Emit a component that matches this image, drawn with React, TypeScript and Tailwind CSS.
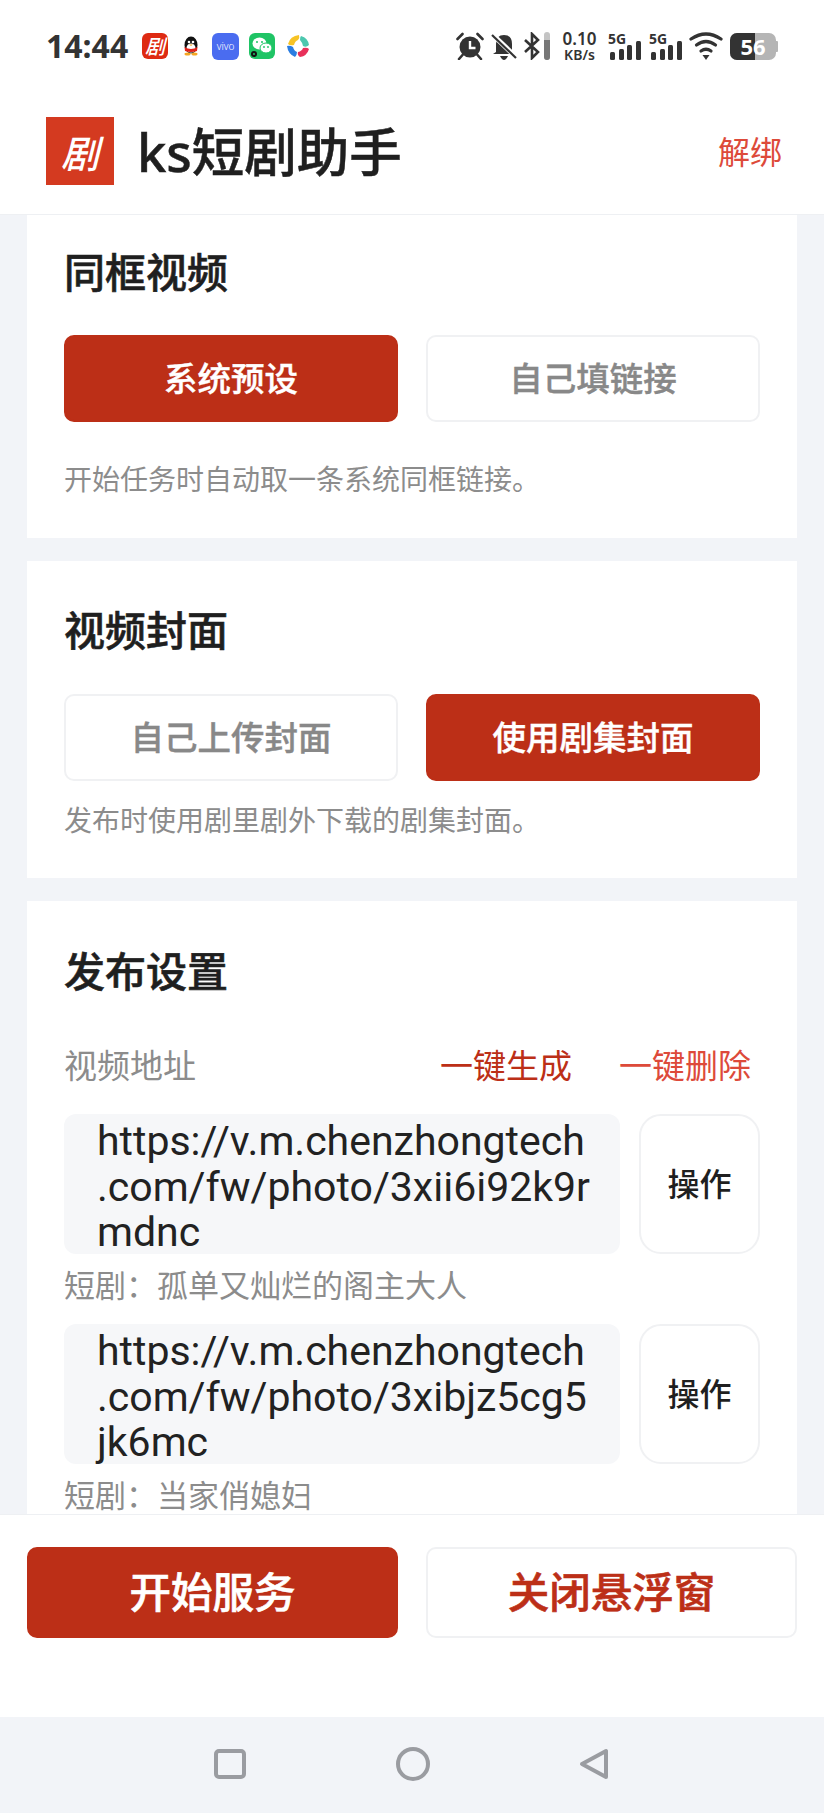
const font = { fontFamily: '"Noto Sans", "Noto Sans CJK SC", sans-serif' };

function Logo({ cls, text }: { cls: string; text: string }) {
  return (
    <div className={`flex items-center justify-center text-white italic font-medium font-['Noto_Sans_CJK_SC'] ${cls}`}>
      {text}
    </div>
  );
}

function Signal({ cls }: { cls: string }) {
  return (
    <div className={`w-[33px] h-[28px] relative ${cls}`}>
      <span className="absolute left-0 top-0 text-[14px] leading-[14px] font-bold font-['Noto_Sans']">5G</span>
      <div className="absolute left-[2px] bottom-0 flex items-end gap-[3.5px]">
        <div className="w-[5px] h-[8px] rounded-[1.5px] bg-[#333]" />
        <div className="w-[5px] h-[11px] rounded-[1.5px] bg-[#333]" />
        <div className="w-[5px] h-[15px] rounded-[1.5px] bg-[#333]" />
        <div className="w-[5px] h-[19px] rounded-[1.5px] bg-[#333]" />
      </div>
    </div>
  );
}

function StatusBar() {
  return (
    <div className="h-[90px] shrink-0 flex items-center pl-[46px] pr-[46px] pt-[2px] bg-white text-[#333]">
      <span className="text-[32px] font-bold leading-none w-[82px] font-['Noto_Sans'] whitespace-nowrap">14:44</span>
      <div className="flex items-center ml-[14px]">
        <Logo cls="w-[26px] h-[26px] rounded-[6px] bg-[#de2a12] text-[20px]" text="剧" />
        <svg width="26" height="26" viewBox="0 0 26 26" className="ml-[10px]">
          <ellipse cx="13" cy="12" rx="6.5" ry="8.5" fill="#111" />
          <ellipse cx="13" cy="15" rx="4.5" ry="4.5" fill="#fff" />
          <path d="M6.5 14 Q13 18 19.5 14 L19 18 Q13 20 7 18Z" fill="#e2231a" />
          <ellipse cx="9.5" cy="21" rx="3" ry="1.5" fill="#f5a623" />
          <ellipse cx="16.5" cy="21" rx="3" ry="1.5" fill="#f5a623" />
          <circle cx="11" cy="9" r="1.3" fill="#fff" />
          <circle cx="15" cy="9" r="1.3" fill="#fff" />
          <path d="M11 11.5 H15 L13 13Z" fill="#f5a623" />
        </svg>
        <div className="ml-[8px] w-[27px] h-[27px] rounded-[6px] bg-[#4a6cf0] text-white text-[10px] leading-[27px] text-center font-['Noto_Sans'] font-light">vivo</div>
        <svg width="26" height="26" viewBox="0 0 26 26" className="ml-[10px]">
          <rect width="26" height="26" rx="6" fill="#1fc465" />
          <ellipse cx="10.5" cy="10.5" rx="7" ry="6" fill="#fff" />
          <ellipse cx="17" cy="15" rx="6" ry="5" fill="#fff" stroke="#1fc465" />
          <circle cx="8" cy="9" r="1" fill="#1fc465" />
          <circle cx="13" cy="9" r="1" fill="#1fc465" />
          <circle cx="15" cy="14" r="0.9" fill="#1fc465" />
          <circle cx="19" cy="14" r="0.9" fill="#1fc465" />
          <circle cx="5" cy="21" r="3" fill="#111" />
          <circle cx="5" cy="21" r="1" fill="#1fc465" />
        </svg>
        <svg width="24" height="24" viewBox="0 0 24 24" className="ml-[11px]">
          <path d="M2 10 Q4 2 13 1 Q14 4 12 6 Q9 7 8 11 Q4 12 2 10Z" fill="#f7c325" />
          <path d="M15 2 Q22 4 23 11 Q20 14 17 12 Q16 8 14 6 Q14 3 15 2Z" fill="#4cc7ae" />
          <path d="M1 12 Q4 11 7 13 Q8 17 11 18 Q11 21 9 23 Q2 20 1 12Z" fill="#2a7de1" />
          <path d="M12 18 Q16 17 17 14 Q21 13 23 15 Q21 22 14 23 Q11 21 12 18Z" fill="#e8305a" />
        </svg>
      </div>
      <div className="flex items-center ml-auto">
        <svg width="28" height="28" viewBox="0 0 28 28" fill="#333">
          <circle cx="14" cy="15" r="10.5" />
          <path d="M14 9v7h5.5" stroke="#fff" strokeWidth="2.4" fill="none" />
          <path d="M1.5 7 L6.5 2 M26.5 7 L21.5 2 M6.5 23 L3 27 M21.5 23 L25 27" stroke="#333" strokeWidth="2.6" strokeLinecap="round" fill="none" />
        </svg>
        <svg width="26" height="28" viewBox="0 0 26 28" fill="#333" className="ml-[7px]">
          <path d="M5 20 V12 Q5 3 13 3 Q21 3 21 12 V20 L24 22 H2Z" />
          <path d="M9 24 H17 Q15 28 13 28 Q11 28 9 24Z" />
          <path d="M2 3 L25 25" stroke="#fff" strokeWidth="5" />
          <path d="M1 3 L25 26" stroke="#333" strokeWidth="2.2" />
        </svg>
        <svg width="18" height="28" viewBox="0 0 18 28" fill="none" stroke="#333" strokeWidth="2.6" className="ml-[6px]">
          <path d="M2 8 L15 20 L9 26 V2 L15 8 L2 20" />
        </svg>
        <div className="w-[6px] h-[28px] rounded-[3px] ml-[3px] bg-[#c4c4c4] overflow-hidden flex flex-col justify-end">
          <div className="h-[20px] bg-[#777]" />
        </div>
        <div className="ml-[13px] w-[33px] flex flex-col items-center font-['Noto_Sans'] font-semibold leading-none">
          <span className="text-[17px] leading-[16px] whitespace-nowrap">0.10</span>
          <span className="text-[14px] leading-[14px] mt-[1px] whitespace-nowrap">KB/s</span>
        </div>
        <Signal cls="ml-[12px]" />
        <Signal cls="ml-[8px]" />
        <svg width="34" height="28" viewBox="0 0 34 28" fill="none" stroke="#333" strokeWidth="3.2" strokeLinecap="round" className="ml-[7px]">
          <path d="M2 7 Q17 -3 32 7" />
          <path d="M7.5 13 Q17 6 26.5 13" />
          <path d="M12 19 Q17 15.5 22 19" />
          <path d="M13.5 23 H20.5 L17 28Z" fill="#333" stroke="none" />
        </svg>
        <div className="ml-[7px] h-[27px] flex items-center">
          <div className="relative w-[46px] h-[27px] rounded-[7px] bg-[#b5b5b5]">
            <div className="h-full w-[25px] bg-[#333] rounded-l-[7px]" />
            <span className="absolute inset-0 text-center text-white text-[22px] leading-[27px] font-bold font-['Noto_Sans']">56</span>
          </div>
          <div className="w-[2px] h-[11px] bg-[#b5b5b5] rounded-r-[1px]" />
        </div>
      </div>
    </div>
  );
}

function Header() {
  return (
    <div className="h-[125px] shrink-0 bg-white border-b border-[#eef0f3] flex items-center pl-[46px] pr-[42px] pb-[2px]">
      <Logo cls="w-[68px] h-[68px] bg-[#d43a20] text-[38px]" text="剧" />
      <span className="ml-[23px] mt-[2px] text-[52.5px] leading-none font-medium text-[#1f1f1f] [-webkit-text-stroke:0.5px_currentColor]">ks短剧助手</span>
      <span className="ml-auto mt-[2px] text-[32px] leading-none text-[#dd4a3a]">解绑</span>
    </div>
  );
}

function Choice({ label, active }: { label: string; active?: boolean }) {
  return (
    <div
      className={
        active
          ? 'h-[87px] flex-1 rounded-[10px] border-2 border-[#bc2f17] bg-[#bc2f17] text-white flex items-center justify-center text-[33.5px] font-medium [-webkit-text-stroke:0.4px_currentColor]'
          : 'h-[87px] flex-1 rounded-[10px] border-2 border-[#f0f1f3] bg-white text-[#888] flex items-center justify-center text-[33.5px] font-medium [-webkit-text-stroke:0.4px_currentColor]'
      }
    >
      {label}
    </div>
  );
}

function UrlRow({ lines, drama }: { lines: string[]; drama: string }) {
  return (
    <div>
      <div className="flex gap-[19px]">
        <div className="w-[556px] h-[140px] rounded-[12px] bg-[#f6f7f9] pl-[33px] pt-[5px] text-[41px] leading-[45.5px] text-[#222] font-['Roboto'] whitespace-nowrap">
          {lines.map((l) => (
            <div key={l}>{l}</div>
          ))}
        </div>
        <div className="w-[121px] h-[140px] rounded-[22px] border-2 border-[#f0f1f3] bg-white flex items-center justify-center text-[32px] font-medium text-[#1f1f1f]">
          操作
        </div>
      </div>
      <div className="mt-[11px] text-[31px] leading-[40px] text-[#8c8c8c]">{drama}</div>
    </div>
  );
}

export default function App() {
  const heading = 'text-[41px] leading-[56px] font-medium text-[#1f1f1f] [-webkit-text-stroke:0.6px_currentColor]';
  return (
    <div className="w-[824px] h-[1813px] flex flex-col overflow-hidden bg-[#f2f4f8]" style={font}>
      <StatusBar />
      <Header />
      <div className="flex-1 min-h-0 overflow-hidden px-[27px] flex flex-col gap-[23px]">
        <div className="bg-white px-[37px] h-[323px] shrink-0 pt-[29px]">
          <h2 className={heading}>同框视频</h2>
          <div className="flex gap-[28px] mt-[35px]">
            <Choice label="系统预设" active />
            <Choice label="自己填链接" />
          </div>
          <p className="mt-[37px] text-[28px] leading-[40px] text-[#8c8c8c]">开始任务时自动取一条系统同框链接。</p>
        </div>
        <div className="bg-white px-[37px] h-[317px] shrink-0 pt-[41px]">
          <h2 className={heading}>视频封面</h2>
          <div className="flex gap-[28px] mt-[36px]">
            <Choice label="自己上传封面" />
            <Choice label="使用剧集封面" active />
          </div>
          <p className="mt-[19px] text-[28px] leading-[40px] text-[#8c8c8c]">发布时使用剧里剧外下载的剧集封面。</p>
        </div>
        <div className="bg-white px-[37px] flex-1 pt-[42px]">
          <h2 className={heading}>发布设置</h2>
          <div className="flex items-center mt-[42px] h-[50px] text-[33px]">
            <span className="text-[#8c8c8c]">视频地址</span>
            <span className="ml-auto text-[#bc2f17]">一键生成</span>
            <span className="ml-[47px] mr-[9px] text-[#dd4a3a]">一键删除</span>
          </div>
          <div className="mt-[23px] flex flex-col gap-[19px]">
            <UrlRow lines={['https://v.m.chenzhongtech', '.com/fw/photo/3xii6i92k9r', 'mdnc']} drama="短剧：孤单又灿烂的阁主大人" />
            <UrlRow lines={['https://v.m.chenzhongtech', '.com/fw/photo/3xibjz5cg5', 'jk6mc']} drama="短剧：当家俏媳妇" />
          </div>
        </div>
      </div>
      <div className="h-[203px] shrink-0 bg-white border-t border-[#eef0f3] px-[27px] pt-[32px] flex gap-[28px]">
        <div className="h-[91px] flex-1 rounded-[10px] border-2 border-[#bc2f17] bg-[#bc2f17] text-white flex items-center justify-center text-[41.5px] font-medium [-webkit-text-stroke:0.6px_currentColor]">开始服务</div>
        <div className="h-[91px] flex-1 rounded-[10px] border-2 border-[#f0f1f3] bg-white text-[#bc2f17] flex items-center justify-center text-[41.5px] font-medium [-webkit-text-stroke:0.6px_currentColor]">关闭悬浮窗</div>
      </div>
      <div className="h-[96px] shrink-0 bg-[#f2f4f8] flex items-center justify-center pb-[2px]">
        <svg width="32" height="32" viewBox="0 0 32 32" fill="none" stroke="#9a9ca1" strokeWidth="4" className="mr-[150px]">
          <rect x="2" y="3" width="28" height="26" rx="3" />
        </svg>
        <svg width="34" height="34" viewBox="0 0 34 34" fill="none" stroke="#9a9ca1" strokeWidth="4" className="mr-[148px]">
          <circle cx="17" cy="17" r="15" />
        </svg>
        <svg width="32" height="32" viewBox="0 0 32 32" fill="none" stroke="#9a9ca1" strokeWidth="4" strokeLinejoin="round">
          <path d="M28 3 V29 L4 16Z" />
        </svg>
      </div>
    </div>
  );
}
